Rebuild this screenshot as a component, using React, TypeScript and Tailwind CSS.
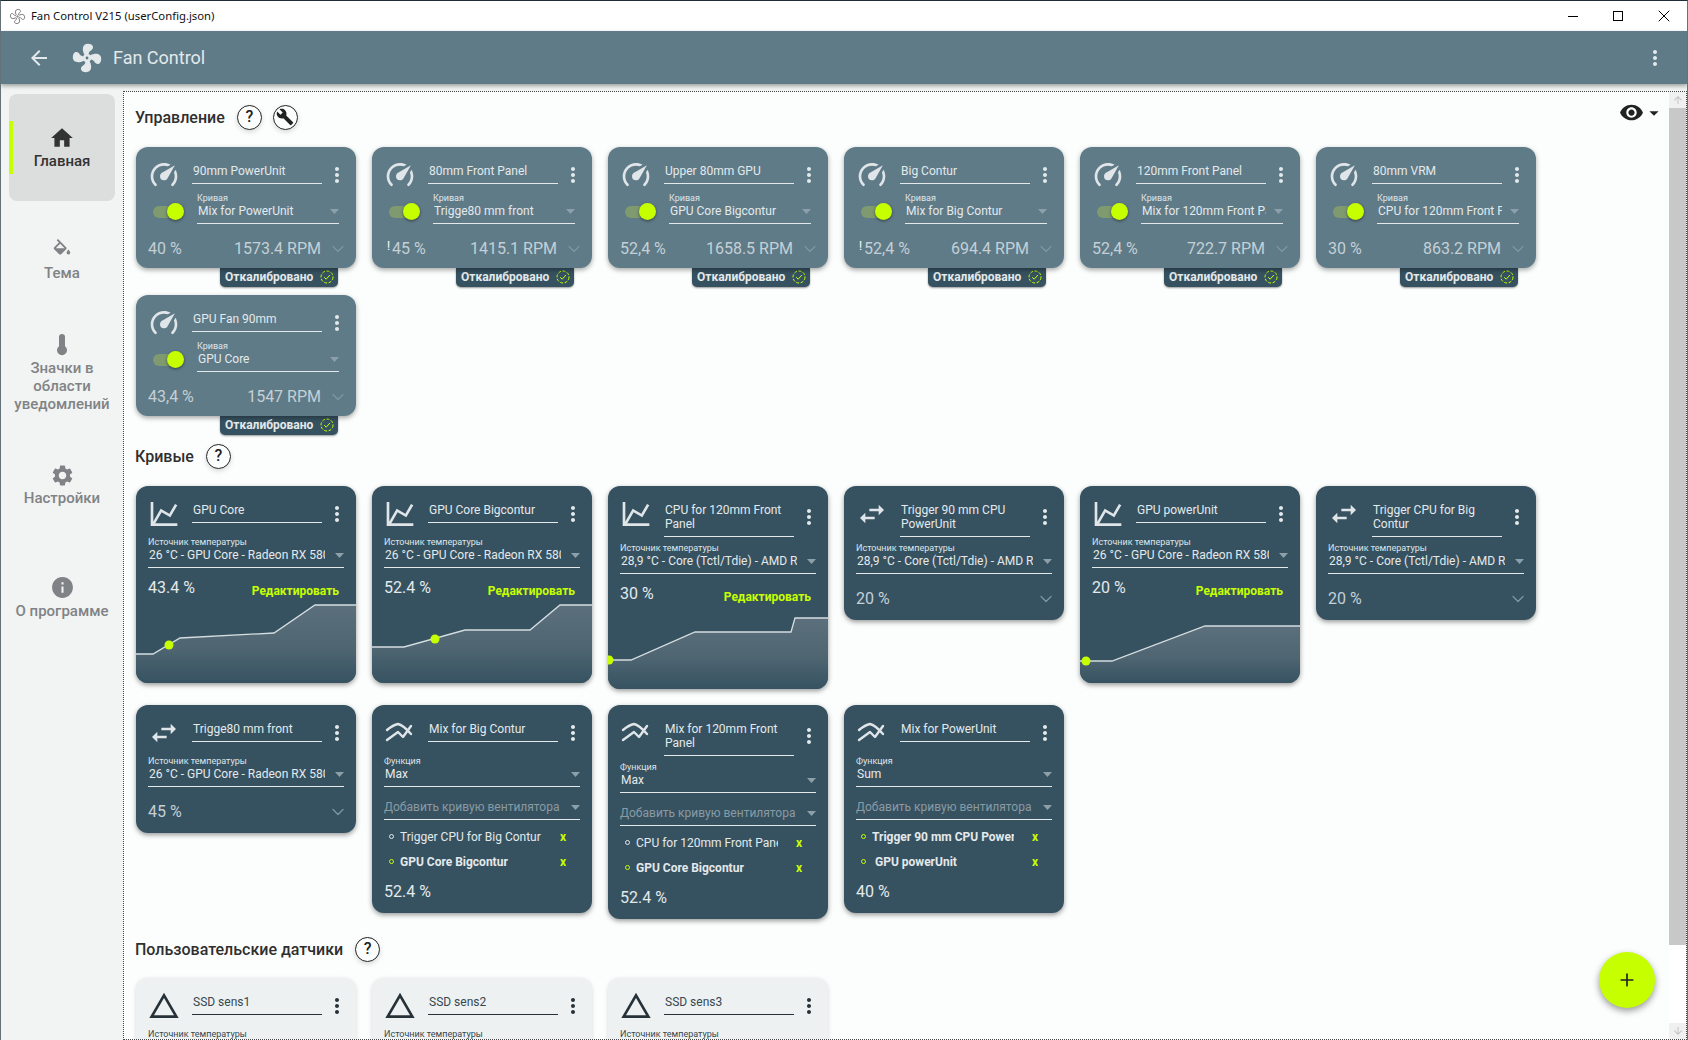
import React from "react";
import { ChevronDown, Plus, X } from "lucide-react";
import {
  MdArrowBack,
  MdBuild,
  MdHome,
  MdInfo,
  MdMoreVert,
  MdSettings,
  MdVisibility,
  MdArrowDropDown,
} from "react-icons/md";

const FAN_PATH =
  "M12,11A1,1 0 0,0 11,12A1,1 0 0,0 12,13A1,1 0 0,0 13,12A1,1 0 0,0 12,11M12.5,2C17,2 17.11,5.57 14.75,6.75C13.76,7.24 13.32,8.29 13.13,9.22C13.61,9.42 14.03,9.73 14.35,10.13C18.05,8.13 22.03,8.92 22.03,12.5C22.03,17 18.46,17.1 17.28,14.73C16.78,13.74 15.72,13.3 14.79,13.11C14.59,13.59 14.28,14 13.88,14.34C15.87,18.03 15.08,22 11.5,22C7,22 6.91,18.42 9.27,17.24C10.25,16.75 10.69,15.71 10.89,14.79C10.4,14.59 9.97,14.27 9.65,13.87C5.96,15.85 2,15.07 2,11.5C2,7 5.56,6.89 6.74,9.26C7.24,10.25 8.29,10.68 9.22,10.87C9.41,10.39 9.73,9.97 10.14,9.65C8.15,5.96 8.94,2 12.5,2Z";

const Mdi = ({ d, size = 32, className }: { d: string; size?: number; className?: string }) => (
  <svg width={size} height={size} viewBox="0 0 24 24" fill="currentColor" className={className}>
    <path d={d} />
  </svg>
);

const SpeedIcon = () => (
  <Mdi d="M12,16A3,3 0 0,1 9,13C9,11.88 9.61,10.9 10.5,10.39L20.21,4.77L14.68,14.35C14.18,15.33 13.17,16 12,16M12,3C13.81,3 15.5,3.5 16.97,4.32L14.87,5.53C14,5.19 13,5 12,5A8,8 0 0,0 4,13C4,15.21 4.89,17.21 6.34,18.65H6.35C6.74,19.04 6.74,19.67 6.35,20.06C5.96,20.45 5.32,20.45 4.93,20.07V20.07C3.12,18.26 2,15.76 2,13A10,10 0 0,1 12,3M22,13C22,15.76 20.88,18.26 19.07,20.07V20.07C18.68,20.45 18.05,20.45 17.66,20.06C17.27,19.67 17.27,19.04 17.66,18.65V18.65C19.11,17.2 20,15.21 20,13C20,12 19.81,11 19.46,10.1L20.67,8C21.5,9.5 22,11.18 22,13Z" />
);
const LineIcon = () => (
  <Mdi d="M16,11.78L20.24,4.45L21.97,5.45L16.74,14.5L10.23,10.75L5.46,19H22V21H2V3H4V17.54L9.5,8L16,11.78Z" />
);
const SwapIcon = () => <Mdi d="M21,9L17,5V8H10V10H17V13M7,11L3,15L7,19V16H14V14H7V11Z" />;
const TriangleIcon = () => <Mdi d="M12,2L1,21H23M12,6L19.53,19H4.47" />;
const MixIcon = () => (
  <svg width="32" height="32" viewBox="0 0 32 32" fill="none" stroke="currentColor" strokeWidth="2.4" strokeLinejoin="round" strokeLinecap="round">
    <path d="M3 13Q9 8 14 7Q19 8 27 17" />
    <path d="M3 23L14 15L19 20L27 9" />
  </svg>
);

const Caret = ({ className }: { className: string }) => (
  <svg width="9" height="5" viewBox="0 0 9 5" className={className} fill="currentColor">
    <path d="M0 0H9L4.5 5Z" />
  </svg>
);

function CardHead({ icon, name, dark = true, minH = "min-h-[50px]", twoLine = false }: {
  icon: React.ReactNode;
  name: string;
  dark?: boolean;
  minH?: string;
  twoLine?: boolean;
}) {
  return (
    <div className={`flex items-start ${minH}`}>
      <div className={`mt-3 h-7 w-8 shrink-0 ${dark ? "text-[#dfe5e8]" : "text-[#263238]"}`}>{icon}</div>
      <div
        className={`mb-[5px] ml-3 mt-[17px] w-[130px] shrink-0 border-b pb-[5px] pl-px text-[12px] leading-[14px] ${
          dark ? "border-[#e4e9eb] text-[#e4e9eb]" : "border-[#263238] text-[#37474f]"
        }`}
      >
        {name}
      </div>
      <MdMoreVert
        size={24}
        className={`ml-[3px] shrink-0 ${twoLine ? "mt-[19px]" : "mt-[16px]"} ${dark ? "text-[#e4e9eb]" : "text-[#263238]"}`}
      />
    </div>
  );
}

function SelectField({ label, value, width }: { label: string; value: string; width: string }) {
  return (
    <div className="flex-1 border-b border-[#e4e9eb] pb-1">
      <div className="h-3 text-[9px] leading-3 text-[#dfe5e8]">{label}</div>
      <div className="flex items-center justify-between">
        <div className={`overflow-hidden whitespace-nowrap pl-px text-[12px] leading-[15px] text-[#e4e9eb] ${width}`}>
          {value}
        </div>
        <Caret className="text-[#8ca0aa]" />
      </div>
    </div>
  );
}

type Fan = { name: string; curve: string; pct: string; warn?: boolean; rpm: string };

const fans: Fan[] = [
  { name: "90mm PowerUnit", curve: "Mix for PowerUnit", pct: "40 %", rpm: "1573.4 RPM" },
  { name: "80mm Front Panel", curve: "Trigge80 mm front", pct: "45 %", warn: true, rpm: "1415.1 RPM" },
  { name: "Upper 80mm GPU", curve: "GPU Core Bigcontur", pct: "52,4 %", rpm: "1658.5 RPM" },
  { name: "Big Contur", curve: "Mix for Big Contur", pct: "52,4 %", warn: true, rpm: "694.4 RPM" },
  { name: "120mm Front Panel", curve: "Mix for 120mm Front Panel", pct: "52,4 %", rpm: "722.7 RPM" },
  { name: "80mm VRM", curve: "CPU for 120mm Front Panel", pct: "30 %", rpm: "863.2 RPM" },
  { name: "GPU Fan 90mm", curve: "GPU Core", pct: "43,4 %", rpm: "1547 RPM" },
];

function FanCard({ fan }: { fan: Fan }) {
  return (
    <div className="w-[220px]">
      <div className="relative z-10 h-[121px] rounded-xl bg-[#5f7b88] px-3 shadow-[0_2px_5px_rgba(0,0,0,0.35)]">
        <CardHead icon={<SpeedIcon />} name={fan.name} minH="min-h-[45px]" />
        <div className="mr-[5px] flex items-center">
          <div className="relative ml-[5px] mr-[13px] mt-2 h-3 w-[31px] shrink-0 rounded-full bg-[#7f9a6e]">
            <div className="absolute -top-[3px] left-[14px] h-[17px] w-[17px] rounded-full bg-[#c6ff00] shadow-[0_1px_3px_rgba(0,0,0,0.5)]" />
          </div>
          <SelectField label="Кривая" value={fan.curve} width="w-[125px]" />
        </div>
        <div className="flex items-center pb-[10px] pt-[15px] text-[16px] leading-[18px] text-[#c4d0d6]">
          <div className={`w-[70px] ${fan.warn ? "pl-[3px]" : ""}`}>
            {fan.warn && <span className="mr-[2px] align-top text-[12px] leading-3 text-white">!</span>}
            {fan.pct}
          </div>
          <div className="flex-1 whitespace-nowrap text-right">{fan.rpm}</div>
          <ChevronDown size={20} strokeWidth={1.5} className="-mr-1 ml-[7px] shrink-0 text-[#7d97a3]" />
        </div>
      </div>
      <div className="ml-[84px] flex h-[19px] w-[118px] items-center justify-between rounded-b-[5px] bg-[#365261] pb-[2px] pl-[5px] pr-[4px] shadow-[0_1px_2px_rgba(0,0,0,0.4)]">
        <span className="text-[12px] font-bold leading-4 text-[#e4e9eb]">Откалибровано</span>
        <svg width="14" height="14" viewBox="0 0 14 14" fill="none" stroke="#c6ff00" strokeWidth="1">
          <circle cx="7" cy="7" r="6" strokeDasharray="3 1.5" />
          <path d="M4.2 7.2L6.2 9.2L9.9 5" />
        </svg>
      </div>
    </div>
  );
}

type Curve = {
  kind: "graph" | "trigger" | "mix";
  name: string;
  twoLine?: boolean;
  source?: string;
  func?: string;
  pct: string;
  points?: number[][];
  dot?: number[];
  items?: { label: string; bold?: boolean; inset?: boolean }[];
};

const GPU_SRC = "26 °C - GPU Core - Radeon RX 580 Series";
const CPU_SRC = "28,9 °C - Core (Tctl/Tdie) - AMD Ryzen 7";

const curves: Curve[] = [
  {
    kind: "graph",
    name: "GPU Core",
    source: GPU_SRC,
    pct: "43.4 %",
    points: [[0, 55], [17, 55], [44, 39], [138, 34], [179, 6], [220, 6]],
    dot: [33, 46],
  },
  {
    kind: "graph",
    name: "GPU Core Bigcontur",
    source: GPU_SRC,
    pct: "52.4 %",
    points: [[0, 48], [32, 48], [93, 31], [158, 31], [188, 6], [220, 6]],
    dot: [63, 40],
  },
  {
    kind: "graph",
    name: "CPU for 120mm Front Panel",
    twoLine: true,
    source: CPU_SRC,
    pct: "30 %",
    points: [[0, 55], [23, 55], [87, 27], [183, 27], [187, 13], [220, 13]],
    dot: [1, 55],
  },
  { kind: "trigger", name: "Trigger 90 mm CPU PowerUnit", twoLine: true, source: CPU_SRC, pct: "20 %" },
  {
    kind: "graph",
    name: "GPU powerUnit",
    source: GPU_SRC,
    pct: "20 %",
    points: [[0, 62], [32, 62], [125, 27], [220, 27]],
    dot: [6, 62],
  },
  { kind: "trigger", name: "Trigger CPU for Big Contur", twoLine: true, source: CPU_SRC, pct: "20 %" },
  { kind: "trigger", name: "Trigge80 mm front", source: GPU_SRC, pct: "45 %" },
  {
    kind: "mix",
    name: "Mix for Big Contur",
    func: "Max",
    pct: "52.4 %",
    items: [{ label: "Trigger CPU for Big Contur" }, { label: "GPU Core Bigcontur", bold: true }],
  },
  {
    kind: "mix",
    name: "Mix for 120mm Front Panel",
    twoLine: true,
    func: "Max",
    pct: "52.4 %",
    items: [{ label: "CPU for 120mm Front Panel" }, { label: "GPU Core Bigcontur", bold: true }],
  },
  {
    kind: "mix",
    name: "Mix for PowerUnit",
    func: "Sum",
    pct: "40 %",
    items: [
      { label: "Trigger 90 mm CPU PowerUnit", bold: true },
      { label: "GPU powerUnit", bold: true, inset: true },
    ],
  },
];

function CurveChart({ id, points, dot }: { id: string; points: number[][]; dot: number[] }) {
  const line = points.map((p) => p.join(",")).join(" ");
  return (
    <svg width="220" height="84" viewBox="0 0 220 84" className="-mx-3 block">
      <defs>
        <linearGradient id={id} x1="0" y1="0" x2="0" y2="1">
          <stop offset="0" stopColor="#5b707c" />
          <stop offset="0.55" stopColor="#4f6572" />
          <stop offset="1" stopColor="#365261" />
        </linearGradient>
      </defs>
      <polygon points={`${line} 220,84 0,84`} fill={`url(#${id})`} />
      <polyline points={line} fill="none" stroke="#d5dde0" strokeWidth="1.3" />
      <circle cx={dot[0]} cy={dot[1]} r="4.5" fill="#c6ff00" />
    </svg>
  );
}

function CurveCard({ curve, index }: { curve: Curve; index: number }) {
  const icon = curve.kind === "graph" ? <LineIcon /> : curve.kind === "trigger" ? <SwapIcon /> : <MixIcon />;
  return (
    <div className="w-[220px] overflow-hidden rounded-xl bg-[#365261] px-3 shadow-[0_2px_5px_rgba(0,0,0,0.4)]">
      <CardHead icon={icon} name={curve.name} twoLine={curve.twoLine} />
      {curve.kind !== "mix" && (
        <SelectField label="Источник температуры" value={curve.source ?? ""} width="w-[177px]" />
      )}
      {curve.kind === "graph" && (
        <>
          <div className="flex h-[31px] items-start justify-between">
            <div className="mt-[11px] text-[16px] leading-[18px] text-[#e4e9eb]">{curve.pct}</div>
            <div className="mr-[5px] mt-[14px] text-[12px] font-bold leading-[18px] text-[#c6ff00]">Редактировать</div>
          </div>
          <CurveChart id={`chart-${index}`} points={curve.points ?? []} dot={curve.dot ?? []} />
        </>
      )}
      {curve.kind === "trigger" && (
        <div className="flex items-center justify-between pb-[11px] pt-[15px] text-[16px] leading-[18px] text-[#c4d0d6]">
          <div>{curve.pct}</div>
          <ChevronDown size={20} strokeWidth={1.5} className="-mr-1 text-[#7d97a3]" />
        </div>
      )}
      {curve.kind === "mix" && (
        <>
          <SelectField label="Функция" value={curve.func ?? ""} width="w-[177px]" />
          <div className="flex items-center justify-between border-b border-[#e4e9eb] pb-1 pt-[13px]">
            <div className="whitespace-nowrap text-[12px] leading-[15px] text-[#8a9aa3]">Добавить кривую вентилятора</div>
            <Caret className="text-[#8ca0aa]" />
          </div>
          <div className="pt-1">
            {(curve.items ?? []).map((item) => (
              <div key={item.label} className="flex h-[25px] items-center pl-[5px] text-[12px]">
                <div
                  className={`h-[5px] w-[5px] shrink-0 rounded-full border ${
                    item.bold ? "border-[#c6ff00]" : "border-[#e4e9eb]"
                  }`}
                />
                <div
                  className={`ml-[6px] w-[142px] overflow-hidden whitespace-nowrap text-[#e4e9eb] ${
                    item.bold ? "font-bold" : ""
                  } ${item.inset ? "pl-[3px]" : ""}`}
                >
                  {item.label}
                </div>
                <div className="ml-[18px] text-[12px] font-bold text-[#c6ff00]">x</div>
              </div>
            ))}
          </div>
          <div className="pb-3 pt-[9px] text-[16px] leading-[18px] text-[#e4e9eb]">{curve.pct}</div>
        </>
      )}
    </div>
  );
}

function SensorCard({ name }: { name: string }) {
  return (
    <div className="h-[80px] w-[220px] rounded-xl bg-[#edf1f2] px-3 shadow-[0_1px_4px_rgba(0,0,0,0.15)]">
      <CardHead icon={<TriangleIcon />} name={name} dark={false} />
      <div className="h-3 text-[9px] leading-3 text-[#37474f]">Источник температуры</div>
    </div>
  );
}

const HelpButton = ({ children }: { children: React.ReactNode }) => (
  <div className="flex h-[25px] w-[25px] items-center justify-center rounded-full border-[1.5px] border-[#222] text-[16px] font-medium text-[#222] shadow-[0_2px_5px_rgba(0,0,0,0.15)]">
    {children}
  </div>
);

function SectionTitle({ title, tools = false, className }: { title: string; tools?: boolean; className: string }) {
  return (
    <div className={`flex h-8 items-center ${className}`}>
      <div className="-ml-px pt-px text-[16px] font-medium text-[#2f2f2f]">{title}</div>
      <div className="ml-3 flex items-center gap-[11px]">
        <HelpButton>?</HelpButton>
        {tools && (
          <HelpButton>
            <MdBuild size={18} />
          </HelpButton>
        )}
      </div>
    </div>
  );
}

const navItems = [
  { label: "Главная", active: true, icon: <MdHome size={26} /> },
  {
    label: "Тема",
    icon: (
      <Mdi
        size={22}
        d="M19,11.5C19,11.5 17,13.67 17,15A2,2 0 0,0 19,17A2,2 0 0,0 21,15C21,13.67 19,11.5 19,11.5M5.21,10L10,5.21L14.79,10M16.56,8.94L7.62,0L6.21,1.41L8.59,3.79L3.44,8.94C2.85,9.5 2.85,10.47 3.44,11.06L8.94,16.56C9.23,16.85 9.62,17 10,17C10.38,17 10.77,16.85 11.06,16.56L16.56,11.06C17.15,10.47 17.15,9.5 16.56,8.94Z"
      />
    ),
  },
  {
    label: "Значки в области уведомлений",
    icon: (
      <svg width="12" height="22" viewBox="0 0 12 22" fill="currentColor">
        <path d="M3 3a3 3 0 0 1 6 0v9.2a5 5 0 1 1-6 0Z" />
      </svg>
    ),
  },
  { label: "Настройки", icon: <MdSettings size={25} /> },
  { label: "О программе", icon: <MdInfo size={25} /> },
];

function Sidebar() {
  return (
    <div className="flex w-[122px] shrink-0 flex-col gap-[5.5px] pl-2 pr-2 pt-[10px]">
      {navItems.map((item) => (
        <div
          key={item.label}
          className={`relative flex h-[107px] shrink-0 flex-col items-center justify-center rounded-lg text-center ${
            item.active ? "bg-[#dcdddd] text-[#333]" : "text-[#808386]"
          }`}
        >
          {item.active && <div className="absolute left-0 top-[27px] h-[53px] w-1 bg-[#c6ff00]" />}
          <div className="flex h-[24px] items-center">{item.icon}</div>
          <div className="-mx-1 mt-[2px] text-[15px] font-medium leading-[18px]">{item.label}</div>
        </div>
      ))}
    </div>
  );
}

function Scrollbar() {
  return (
    <div className="flex w-[17px] shrink-0 flex-col bg-white">
      <div className="flex h-4 items-center justify-center bg-[#f0f0f0] text-[#c4c4c4]">
        <MdArrowBack size={12} className="rotate-90" />
      </div>
      <div className="h-[837px] bg-[#c8c8c8]" />
      <div className="flex-1" />
      <div className="flex h-4 items-center justify-center bg-[#f0f0f0] text-[#c4c4c4]">
        <MdArrowBack size={12} className="-rotate-90" />
      </div>
    </div>
  );
}

export default function App() {
  return (
    <div className="flex h-[1040px] w-[1688px] flex-col overflow-hidden border-x border-t border-x-[#66727a] border-t-[#1f2d36] bg-[#f2f3f3] font-['Roboto',sans-serif]">
      <div className="flex h-[30px] shrink-0 items-center bg-white">
        <svg width="17" height="17" viewBox="0 0 24 24" fill="none" stroke="#666" strokeWidth="1.2" className="ml-2">
          <path d={FAN_PATH} />
        </svg>
        <div className="ml-[5px] font-['Noto_Sans',sans-serif] text-[11.3px] text-[#111]">Fan Control V215 (userConfig.json)</div>
        <div className="ml-auto flex items-center">
          <div className="mr-[35px] h-px w-[10px] bg-black" />
          <div className="mr-[31px] h-[10px] w-[10px] border border-black" />
          <X size={20} strokeWidth={1.2} className="mr-[13px] text-black" />
        </div>
      </div>

      <div className="relative z-20 flex h-[53px] shrink-0 items-center bg-[#5f7b88] shadow-[0_2px_4px_rgba(0,0,0,0.35)]">
        <MdArrowBack size={24} className="ml-[26px] text-[#e4e9eb]" />
        <Mdi d={FAN_PATH} size={34} className="ml-[19px] text-[#e4e9eb]" />
        <div className="ml-[9px] text-[18px] text-[#e4e9eb]">Fan Control</div>
        <MdMoreVert size={24} className="ml-auto mr-[20px] text-[#e4e9eb]" />
      </div>

      <div className="flex min-h-0 flex-1">
        <Sidebar />
        <div className="relative mt-[7px] flex min-w-0 flex-1 border border-dotted border-[#444] bg-[#fcfdfd]">
          <div className="min-w-0 flex-1 overflow-hidden pl-3 pt-[9px]">
            <SectionTitle title="Управление" tools className="mb-[14px]" />
            <div className="flex flex-wrap items-start gap-x-4 gap-y-2">
              {fans.map((fan) => (
                <FanCard key={fan.name} fan={fan} />
              ))}
            </div>

            <SectionTitle title="Кривые" className="mb-[14px] mt-[5px]" />
            <div className="flex flex-wrap items-start gap-x-4 gap-y-4">
              {curves.map((curve, i) => (
                <CurveCard key={curve.name} curve={curve} index={i} />
              ))}
            </div>

            <SectionTitle title="Пользовательские датчики" className="mb-[13px] mt-[14px]" />
            <div className="flex flex-wrap items-start gap-x-4">
              <SensorCard name="SSD sens1" />
              <SensorCard name="SSD sens2" />
              <SensorCard name="SSD sens3" />
            </div>
          </div>
          <Scrollbar />

          <div className="absolute right-[21px] top-[8px] flex items-center text-[#222]">
            <MdVisibility size={25} />
            <MdArrowDropDown size={22} className="-ml-[1px]" />
          </div>
          <div className="absolute bottom-[31px] right-[31px] flex h-14 w-14 items-center justify-center rounded-full bg-[#c6ff00] shadow-[0_3px_7px_rgba(0,0,0,0.4)]">
            <Plus size={20} strokeWidth={2} className="text-[#222]" />
          </div>
        </div>
      </div>
    </div>
  );
}
